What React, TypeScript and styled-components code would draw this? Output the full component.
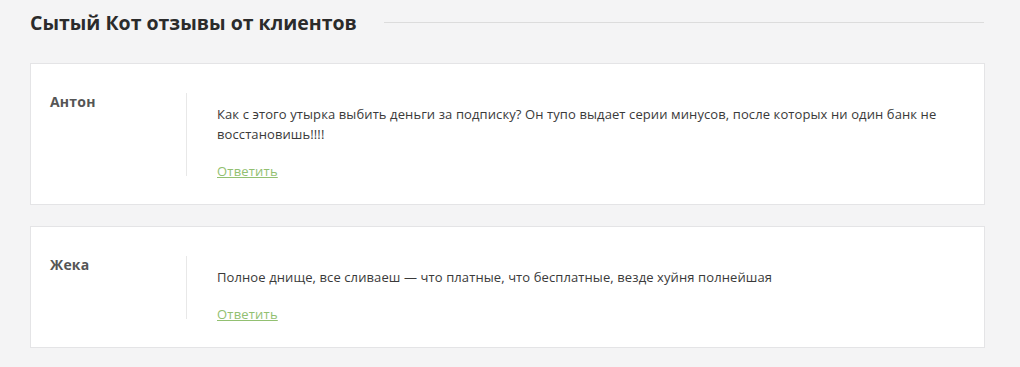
import styled, { createGlobalStyle } from "styled-components";

const Global = createGlobalStyle`
  body {
    margin: 0;
    background: #f4f4f5;
    font-family: "Open Sans", "Liberation Sans", sans-serif;
  }
`;

const Page = styled.div`
  padding: 0 35px 19px 30px;
`;

const Header = styled.header`
  display: flex;
  align-items: center;
  height: 44px;
  margin-bottom: 19px;
`;

const Title = styled.h2`
  margin: 0;
  font-family: "Open Sans", "Liberation Sans", sans-serif;
  font-size: 19.5px;
  font-weight: 700;
  color: #2b2b2b;
  white-space: nowrap;
`;

const Rule = styled.div`
  flex: 1;
  height: 1px;
  margin-left: 27px;
  margin-right: 1px;
  background: #dcdcdc;
`;

const List = styled.div`
  display: flex;
  flex-direction: column;
  gap: 21px;
`;

const Card = styled.article`
  display: flex;
  background: #fff;
  border: 1px solid #e4e4e6;
  padding: 29px 30px 28px 19px;
`;

const Name = styled.div`
  width: 136px;
  flex-shrink: 0;
  font-size: 14px;
  line-height: 18px;
  font-weight: 700;
  color: #555;
  letter-spacing: 0.2px;
`;

const Body = styled.div`
  flex: 1;
  border-left: 1px solid #e8e8e8;
  padding: 11px 0 0 30px;
`;

const Text = styled.p`
  margin: 0;
  font-size: 13px;
  line-height: 20px;
  color: #3a3a3a;
  letter-spacing: 0.1px;
`;

const Reply = styled.a`
  display: block;
  width: max-content;
  margin-top: 22px;
  font-size: 13px;
  line-height: 10px;
  color: #92c071;
  text-decoration: underline;
  letter-spacing: 0.2px;
  cursor: pointer;
`;

const reviews = [
  {
    name: "Антон",
    text: "Как с этого утырка выбить деньги за подписку? Он тупо выдает серии минусов, после которых ни один банк не восстановишь!!!!",
  },
  {
    name: "Жека",
    text: "Полное днище, все сливаеш — что платные, что бесплатные, везде хуйня полнейшая",
  },
];

export default function App() {
  return (
    <Page>
      <Global />
      <Header>
        <Title>Сытый Кот отзывы от клиентов</Title>
        <Rule />
      </Header>
      <List>
        {reviews.map((r) => (
          <Card key={r.name}>
            <Name>{r.name}</Name>
            <Body>
              <Text>{r.text}</Text>
              <Reply>Ответить</Reply>
            </Body>
          </Card>
        ))}
      </List>
    </Page>
  );
}
